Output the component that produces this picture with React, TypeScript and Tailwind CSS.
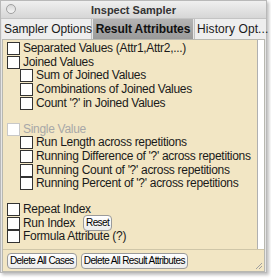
import React from "react"

function Box({ disabled }: { disabled?: boolean }) {
  return (
    <span
      className={`inline-block w-[13px] h-[13px] shrink-0 bg-white border ${disabled ? "border-[#c8c8c8]" : "border-[#333]"}`}
    />
  )
}

function Row({ label, indent, disabled, children }: { label: string; indent?: boolean; disabled?: boolean; children?: React.ReactNode }) {
  return (
    <div className={`flex items-center gap-[3px] h-[13.6px] whitespace-nowrap ${indent ? "pl-[13px]" : ""}`}>
      <Box disabled={disabled} />
      <span className={disabled ? "text-[#a8a8a8]" : "text-[#1a1a1a]"}>{label}</span>
      {children}
    </div>
  )
}

function SmallButton({ children }: { children: React.ReactNode }) {
  return (
    <button className="h-[16px] px-[2px] rounded-[4px] border border-[#9a9a9a] bg-gradient-to-b from-white to-[#ececec] text-[10px] leading-none text-black tracking-[-0.6px] whitespace-nowrap">
      {children}
    </button>
  )
}

export default function App() {
  return (
    <div className="w-[271px] h-[278px] bg-white font-['Liberation_Sans',Arial,sans-serif]">
      <div className="w-[267px] h-[273px] flex flex-col bg-[#e6e6e6] border border-[#b9b9b9] shadow-[2px_2px_3px_rgba(0,0,0,0.25)]">
        <div className="relative h-[17px] flex items-center justify-center bg-gradient-to-b from-[#f0f0f0] to-[#d6d6d6]">
          <span className="absolute left-[5px] top-[3px] w-[10px] h-[10px] rounded-full border border-[#a0a0a0] bg-gradient-to-b from-[#d8d8d8] to-[#f4f4f4]" />
          <span className="text-[11px] font-bold text-[#333] pt-[2px]">Inspect Sampler</span>
        </div>
        <div className="flex h-[21px] items-stretch pl-[1px] gap-[1px] text-[12px] whitespace-nowrap border-t border-[#c4c4c4]">
          <div className="flex items-center w-[90px] pl-[2px] bg-[#eeeeee] text-[#1a1a1a] tracking-[-0.1px] border-r border-[#c0c0c0]">Sampler Options</div>
          <div className="flex items-center justify-center w-[100px] bg-gradient-to-b from-[#b4b4b4] to-[#9a9a9a] font-bold text-[#111] tracking-[-0.1px]">Result Attributes</div>
          <div className="flex items-center w-[72px] pl-[2px] bg-[#eeeeee] text-[#1a1a1a] tracking-[0.1px] border-l border-[#c0c0c0]">History Opt...</div>
        </div>
        <div className="flex-1 flex flex-col mx-[1px] bg-[#f2e6c4] border border-[#b8b8b0]">
          <div className="flex-1 flex">
            <div className="flex-1 flex flex-col pl-[4px] pt-[2px] text-[12px] leading-[13px] tracking-[-0.3px]">
              <Row label="Separated Values (Attr1,Attr2,...)" />
              <Row label="Joined Values" />
              <Row label="Sum of Joined Values" indent />
              <Row label="Combinations of Joined Values" indent />
              <Row label="Count '?' in Joined Values" indent />
              <div className="h-[12.5px]" />
              <Row label="Single Value" disabled />
              <Row label="Run Length across repetitions" indent />
              <Row label="Running Difference of '?' across repetitions" indent />
              <Row label="Running Count of '?' across repetitions" indent />
              <Row label="Running Percent of '?' across repetitions" indent />
              <div className="h-[12.5px]" />
              <Row label="Repeat Index" />
              <Row label="Run Index">
                <span className="ml-[5px]"><SmallButton>Reset</SmallButton></span>
              </Row>
              <Row label="Formula Attribute (?)" />
            </div>
            <div className="w-[7px] bg-white border-l border-[#b0b0b0]" />
          </div>
          <div className="relative h-[22px] flex items-center gap-[4px] pl-[4px] border-t border-[#cfc6a8]">
            <SmallButton>Delete All Cases</SmallButton>
            <SmallButton>Delete All Result Attributes</SmallButton>
            <svg className="absolute right-[1px] bottom-[1px]" width="8" height="8" viewBox="0 0 8 8">
              <path d="M7 1 L1 7 M7 4 L4 7" stroke="#a0a0a0" strokeWidth="1" />
            </svg>
          </div>
        </div>
      </div>
    </div>
  )
}
